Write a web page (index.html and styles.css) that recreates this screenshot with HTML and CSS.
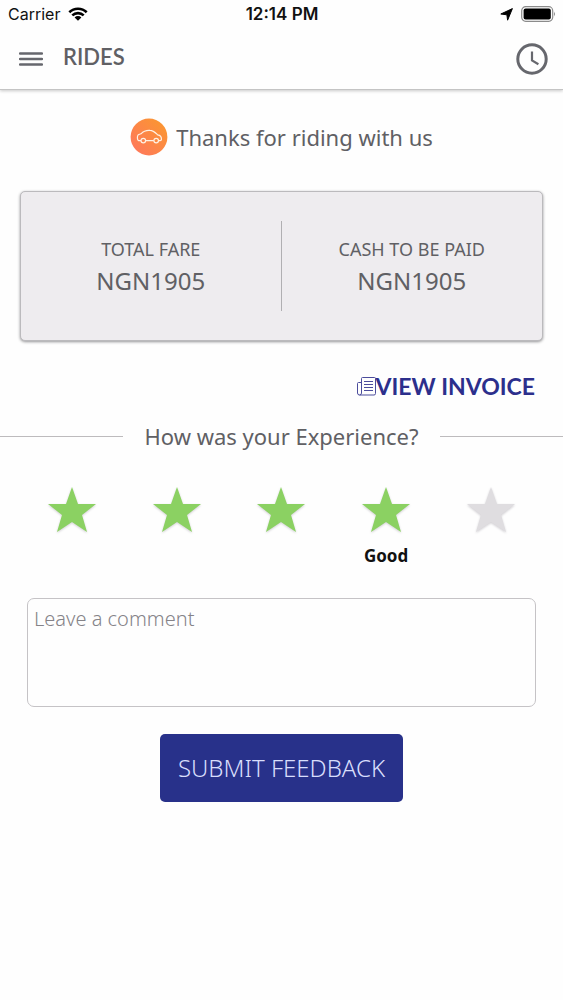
FILE: index.html
```html
<!DOCTYPE html>
<html lang="en">
<head>
<meta charset="utf-8">
<meta name="viewport" content="width=device-width, initial-scale=1">
<title>Rides</title>
<link rel="stylesheet" href="styles.css">
</head>
<body>
<header class="header">
  <div class="status">
    <div class="status-left">
      <span>Carrier</span>
      <svg class="wifi" viewBox="0 0 20 14" aria-hidden="true"><path d="M1.3 5.2a12.6 12.6 0 0 1 17.4 0M4.3 8.4a8.2 8.2 0 0 1 11.4 0" fill="none" stroke="#000" stroke-width="2.6"/><path d="M10 13.8 6.6 10.5a4.8 4.8 0 0 1 6.8 0z"/></svg>
    </div>
    <span class="time">12:14 PM</span>
    <div class="status-right">
      <svg class="location" viewBox="0 0 13 13" aria-hidden="true"><path d="M12.4.6 7.6 12.2 6.9 6.8.8 6z" stroke="#000" stroke-linejoin="round"/></svg>
      <svg class="battery" viewBox="0 0 35 16" aria-hidden="true"><rect x=".7" y=".7" width="31" height="14.6" rx="4" fill="none" stroke="#8b8b8b" stroke-width="1.2"/><rect x="2.6" y="2.6" width="27.2" height="10.8" rx="2"/><path d="M33 5.6q1.8 2.4 0 4.8z" fill="#777"/></svg>
    </div>
  </div>
  <nav class="nav">
    <button class="icon-button" type="button" aria-label="Menu">
      <svg class="menu" viewBox="0 0 24 14" aria-hidden="true"><path d="M1 1.500h22M1 7h22M1 12.500h22" stroke="#66676d" stroke-width="2.300" stroke-linecap="round"/></svg>
    </button>
    <h1 class="title">RIDES</h1>
    <button class="icon-button" type="button" aria-label="Ride history">
      <svg class="clock" viewBox="0 0 32 32" fill="none" stroke="#66676d" aria-hidden="true"><circle cx="16" cy="16" r="14.2" stroke-width="3"/><path d="M16 8.4v9l6.4 3.800" stroke-width="2.2"/></svg>
    </button>
  </nav>
</header>
<main class="main">
  <div class="thanks">
    <svg class="car" viewBox="0 0 38 38" aria-hidden="true">
      <defs><linearGradient id="glow" x1="0" y1="1" x2="1" y2="0"><stop offset="0" stop-color="#ff7560"/><stop offset="1" stop-color="#fa9a2c"/></linearGradient></defs>
      <circle cx="19" cy="19" r="18.4" fill="url(#glow)"/>
      <g fill="none" stroke="#fff1e4" stroke-width="1.2" stroke-linejoin="round"><path d="M11 22.600H8.400c-1.200-.8-1.400-4.500-.2-5.800l2.800-1c2.400-2.600 5-3.700 9-3.400 3.200 0 5.300 2.200 7.600 4.400 3.300.4 4.200 1.700 3.800 5.200l-1 .6h-1.700M15.600 22.600h8.200"/><circle cx="13.300" cy="22.600" r="2.300"/><circle cx="26.200" cy="22.600" r="2.300"/></g>
    </svg>
    <span>Thanks for riding with us</span>
  </div>
  <section class="fare" aria-label="Fare summary">
    <div class="fare-item"><span class="fare-label">TOTAL FARE</span><span class="amount">NGN1905</span></div>
    <div class="fare-item"><span class="fare-label">CASH TO BE PAID</span><span class="amount">NGN1905</span></div>
  </section>
  <a class="invoice" href="#invoice">
    <svg class="paper" viewBox="0 0 19 19" fill="none" stroke="#4b4c9c" aria-hidden="true"><path d="M4.500 1.500q0-1 1-1h12q1 0 1 1v15q0 1.500-1.500 1.500H2.500q-2 0-2-2V6.500q0-1 1-1h3M4.500 1.500v14.500q0 2-2 2M7 4.500h9M7 7.500h9M7 10.500h9M7 13.500h9"/></svg>VIEW INVOICE</a>
  <form class="feedback">
    <fieldset class="rating">
      <legend class="legend">How was your Experience?</legend>
      <div class="stars">
        <label class="star"><input class="star-input" type="radio" name="rating" value="1" aria-label="1 star"><svg class="star-icon on" viewBox="0 0 50 48" aria-hidden="true"><path d="M25 1l6 17h18L35 29l5 17-15-10-15 10 5-17L1 18h18z"/></svg></label>
        <label class="star"><input class="star-input" type="radio" name="rating" value="2" aria-label="2 stars"><svg class="star-icon on" viewBox="0 0 50 48" aria-hidden="true"><path d="M25 1l6 17h18L35 29l5 17-15-10-15 10 5-17L1 18h18z"/></svg></label>
        <label class="star"><input class="star-input" type="radio" name="rating" value="3" aria-label="3 stars"><svg class="star-icon on" viewBox="0 0 50 48" aria-hidden="true"><path d="M25 1l6 17h18L35 29l5 17-15-10-15 10 5-17L1 18h18z"/></svg></label>
        <label class="star"><input class="star-input" type="radio" name="rating" value="4" checked><svg class="star-icon on" viewBox="0 0 50 48" aria-hidden="true"><path d="M25 1l6 17h18L35 29l5 17-15-10-15 10 5-17L1 18h18z"/></svg><span class="caption">Good</span></label>
        <label class="star"><input class="star-input" type="radio" name="rating" value="5" aria-label="5 stars"><svg class="star-icon" viewBox="0 0 50 48" aria-hidden="true"><path d="M25 1l6 17h18L35 29l5 17-15-10-15 10 5-17L1 18h18z"/></svg></label>
      </div>
    </fieldset>
    <textarea class="comment" placeholder="Leave a comment" aria-label="Leave a comment"></textarea>
    <button class="submit" type="button">SUBMIT FEEDBACK</button>
  </form>
</main>
</body>
</html>
```
FILE: styles.css
```css
* {
  box-sizing: border-box;
}

body {
  margin: 0;
  background: #fefefe;
  color: #606064;
  font-family: "Noto Sans", "Open Sans", sans-serif;
}

svg {
  display: block;
  flex: none;
}

.header {
  border-bottom: 1px solid #c4c4c4;
  box-shadow: 0 1px 3px #c8c8c8;
}

.status {
  display: grid;
  grid-template-columns: 1fr auto 1fr;
  align-items: center;
  height: 28px;
  padding: 0 7px 0 8px;
  color: #111;
  font: 16px/28px Inter, sans-serif;
}

.status-left,
.status-right {
  display: flex;
  align-items: center;
  gap: 8px;
}

.status-right {
  justify-content: flex-end;
}

.time {
  font-size: 17px;
  font-weight: 600;
}

.wifi {
  width: 20px;
  height: 14px;
}

.location {
  width: 13px;
  height: 13px;
}

.battery {
  width: 35px;
  height: 16px;
}

.nav {
  display: flex;
  align-items: center;
  gap: 20px;
  height: 61px;
  padding: 0 15px 0 19px;
}

.icon-button {
  padding: 0;
  border: 0;
  background: none;
}

.menu {
  width: 24px;
  height: 16px;
}

.clock {
  width: 32px;
  height: 32px;
}

.title {
  flex: 1;
  margin: 0;
  padding-bottom: 4px;
  font: 600 22px/32px Lato, sans-serif;
}

.main {
  display: flex;
  flex-direction: column;
}

.thanks {
  display: flex;
  align-items: center;
  justify-content: center;
  gap: 8px;
  margin-top: 28px;
  font-size: 22px;
  line-height: 38px;
}

.car {
  width: 38px;
  height: 38px;
}

.fare {
  display: grid;
  grid-template-columns: 1fr 1fr;
  margin: 35px 20px 0;
  padding: 29px 0;
  border: 1px solid #bbbabd;
  border-radius: 5px;
  background: #eeecef;
  box-shadow: 0 1px 3px #949496;
}

.fare-item {
  display: flex;
  flex-direction: column;
  align-items: center;
  padding: 12px 0 14px;
}

.fare-item:first-child {
  border-right: 1px solid #b0afb2;
}

.fare-label {
  font-size: 18px;
  line-height: 32px;
}

.amount {
  font-size: 24px;
  line-height: 32px;
}

.invoice {
  display: flex;
  align-items: center;
  align-self: flex-end;
  margin: 29px 28px 0 0;
  color: #2c2f8c;
  font: 700 23px/32px Lato, sans-serif;
  text-decoration: none;
}

.paper {
  width: 19px;
  height: 19px;
}

.feedback {
  display: flex;
  flex-direction: column;
  margin-top: 18px;
}

.rating {
  min-width: 0;
  margin: 0;
  padding: 0;
  border: 0;
}

.legend {
  display: flex;
  align-items: center;
  gap: 21px;
  width: 100%;
  padding: 0;
  font-size: 22px;
  line-height: 32px;
}

.legend::before,
.legend::after {
  content: "";
  flex: 1;
  height: 1px;
  background: #bdbbbd;
}

.stars {
  display: grid;
  grid-template-columns: repeat(5, 1fr);
  padding: 34px 20px 0;
}

.star {
  position: relative;
  display: flex;
  flex-direction: column;
  align-items: center;
}

.star-input {
  position: absolute;
  opacity: 0;
}

.star-icon {
  width: 50px;
  height: 48px;
  fill: #dfdde0;
  filter: drop-shadow(0 1px 1px #d0ced2);
}

.on {
  fill: #8bd162;
}

.caption {
  margin-top: 8px;
  color: #111;
  font-size: 17px;
  font-weight: 700;
  line-height: 28px;
}

.comment {
  height: 109px;
  margin: 28px 27px 0;
  padding: 6px;
  border: 1px solid #c5c3c6;
  border-radius: 7px;
  background: #fefefe;
  color: #606064;
  font: 300 20px/28px "Noto Sans", sans-serif;
  resize: none;
}

.comment::placeholder {
  color: #858388;
  opacity: 1;
}

.submit {
  align-self: center;
  margin: 27px 0;
  padding: 18px;
  border: 0;
  border-radius: 5px;
  background: #28318a;
  color: #d8defc;
  font: 300 24px/32px "Noto Sans", sans-serif;
}
```
